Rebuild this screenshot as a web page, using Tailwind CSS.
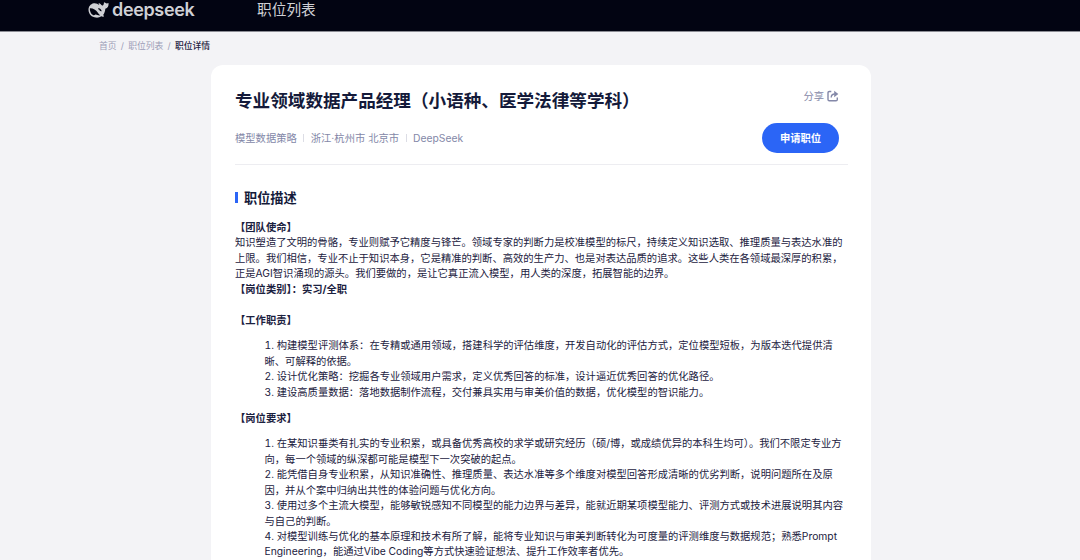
<!DOCTYPE html>
<html lang="zh-CN">
<head>
<meta charset="utf-8">
<title>职位详情</title>
<script src="https://cdn.jsdelivr.net/npm/@tailwindcss/browser@4"></script>
</head>
<body class="h-[560px] overflow-hidden bg-[#f3f3f6] text-[#1b2140] font-['Inter','Noto_Sans_CJK_SC',sans-serif]">
<header class="flex h-8 items-start border-b border-[#8b8c94] bg-[#020412] pl-[88px] text-[#cfd0d5]">
  <div class="flex h-5 w-[169px] items-start gap-[3px]">
    <svg class="mt-[1px] h-[17px] w-[21px] shrink-0" viewBox="0 0 21 17" fill="none">
      <path fill="currentColor" d="M20.5 2C19.3 2.7 18.2 2.7 17.2 1.8C16.4 1.1 15.9 .9 15.9 1.9C15.9 3.4 15.3 4.4 14.2 4.6C12.9 4.1 12.6 2.5 11.3 2.2C10.6 2.1 10.4 2.7 10.9 3.2L11.4 4C9.8 3 7.9 1.9 5.8 2.3C2.4 3 .4 5.8.5 9C.7 13.1 3.7 16.3 8 16.6C10.1 16.8 12 16.1 13.3 15.3C14.1 15.7 15.2 15.8 15.8 15.4C16.2 15 15.5 14.5 15.1 14C16.5 12.3 17.2 10 17.3 7.7C19.8 7.2 20.9 4.8 20.5 2Z"/>
      <path fill="#020412" d="M1.8 7.4C4.8 7.1 8 9 9.7 11.6C10.8 13.3 11.3 13.8 12.3 14.3C9.9 14.8 8.6 13 7.4 13.5C6.6 13.9 6.3 14.6 5 14C2.9 13 1.6 9.7 1.8 7.4ZM10.2 7.2C11.9 6.8 13.5 8.3 13.7 10.3C12.9 10.5 11.9 10.2 11.5 9.6C12 9.1 11.2 8.2 10.2 8.2Z"/>
    </svg>
    <span class="mt-px text-[18px] leading-[18px] font-semibold tracking-[-0.35px]">deepseek</span>
  </div>
  <a class="text-[14.7px] leading-[21px]">职位列表</a>
</header>
<nav class="flex h-[32.5px] items-start gap-[4.2px] pt-[7px] pl-[99px] text-[8.8px] leading-[14px] text-[#9b9db6]">
  <span>首页</span><span>/</span><span>职位列表</span><span>/</span><span class="font-medium text-[#1b2140]">职位详情</span>
</nav>
<main class="ml-[211px] h-[520px] w-[660px] rounded-t-[12px] bg-white px-6 pt-[21.5px]">
  <section class="flex h-[79px] w-[613px] justify-between border-b border-[#ededf1] pr-[9px]">
    <div>
      <h1 class="mt-px text-[17.6px] leading-[28px] font-bold whitespace-nowrap text-[#141a3a]">专业领域数据产品经理（小语种、医学法律等学科）</h1>
      <div class="mt-[15px] flex items-center text-[10.3px] leading-[16px] whitespace-nowrap text-[#8488a8]">
        <span>模型数据策略</span><i class="mx-[6.5px] h-2 w-px bg-[#dcdde5]"></i><span>浙江·杭州市 北京市</span><i class="mx-[6.5px] h-2 w-px bg-[#dcdde5]"></i><span>DeepSeek</span>
      </div>
    </div>
    <div class="flex flex-col items-end">
      <div class="mt-[1.5px] flex h-4 items-center gap-[3px] text-[10.3px] leading-4 text-[#8488a8]">
        <span>分享</span>
        <svg class="h-3 w-3" viewBox="0 0 12 12" fill="none" stroke="currentColor" stroke-width="1.4"><path d="M4.3 1.5H2.3Q1 1.5 1 2.8V9.5Q1 10.8 2.3 10.8H9Q10.3 10.8 10.3 9.5V7.6"/><path d="M4.2 7.5C4.3 5 5.5 4 7.8 4"/><path fill="currentColor" stroke="none" d="M7.2 .8L11.3 4L7.2 7.2Z"/></svg>
      </div>
      <button class="mt-[19.5px] h-[30px] w-[77px] rounded-full bg-[#2b65f6] text-[10.3px] leading-[30px] font-bold text-white">申请职位</button>
    </div>
  </section>
  <h2 class="mt-[22.5px] flex h-5 items-center gap-[6px] text-[13.2px] leading-5 font-bold text-[#141a3a]"><i class="h-[11px] w-[3px] bg-[#2b65f6]"></i>职位描述</h2>
  <article class="mt-[12.5px] text-[10.3px] leading-[15.45px] whitespace-nowrap tabular-nums">
    <p class="font-bold">【团队使命】</p>
    <p>知识塑造了文明的骨骼，专业则赋予它精度与锋芒。领域专家的判断力是校准模型的标尺，持续定义知识选取、推理质量与表达水准的<br>上限。我们相信，专业不止于知识本身，它是精准的判断、高效的生产力、也是对表达品质的追求。这些人类在各领域最深厚的积累，<br>正是AGI智识涌现的源头。我们要做的，是让它真正流入模型，用人类的深度，拓展智能的边界。</p>
    <p class="font-bold">【岗位类别】：实习/全职</p>
    <p class="mt-[15.45px] font-bold">【工作职责】</p>
    <div class="mt-[10.3px] pl-[29.5px]">
      <p>1. 构建模型评测体系：在专精或通用领域，搭建科学的评估维度，开发自动化的评估方式，定位模型短板，为版本迭代提供清<br>晰、可解释的依据。</p>
      <p>2. 设计优化策略：挖掘各专业领域用户需求，定义优秀回答的标准，设计逼近优秀回答的优化路径。</p>
      <p>3. 建设高质量数据：落地数据制作流程，交付兼具实用与审美价值的数据，优化模型的智识能力。</p>
    </div>
    <p class="mt-[10.3px] font-bold">【岗位要求】</p>
    <div class="mt-[10.3px] pl-[29.5px]">
      <p>1. 在某知识垂类有扎实的专业积累，或具备优秀高校的求学或研究经历（硕/博，或成绩优异的本科生均可）。我们不限定专业方<br>向，每一个领域的纵深都可能是模型下一次突破的起点。</p>
      <p>2. 能凭借自身专业积累，从知识准确性、推理质量、表达水准等多个维度对模型回答形成清晰的优劣判断，说明问题所在及原<br>因，并从个案中归纳出共性的体验问题与优化方向。</p>
      <p>3. 使用过多个主流大模型，能够敏锐感知不同模型的能力边界与差异，能就近期某项模型能力、评测方式或技术进展说明其内容<br>与自己的判断。</p>
      <p>4. 对模型训练与优化的基本原理和技术有所了解，能将专业知识与审美判断转化为可度量的评测维度与数据规范；熟悉Prompt<br>Engineering，能通过Vibe Coding等方式快速验证想法、提升工作效率者优先。</p>
    </div>
  </article>
</main>
</body>
</html>
